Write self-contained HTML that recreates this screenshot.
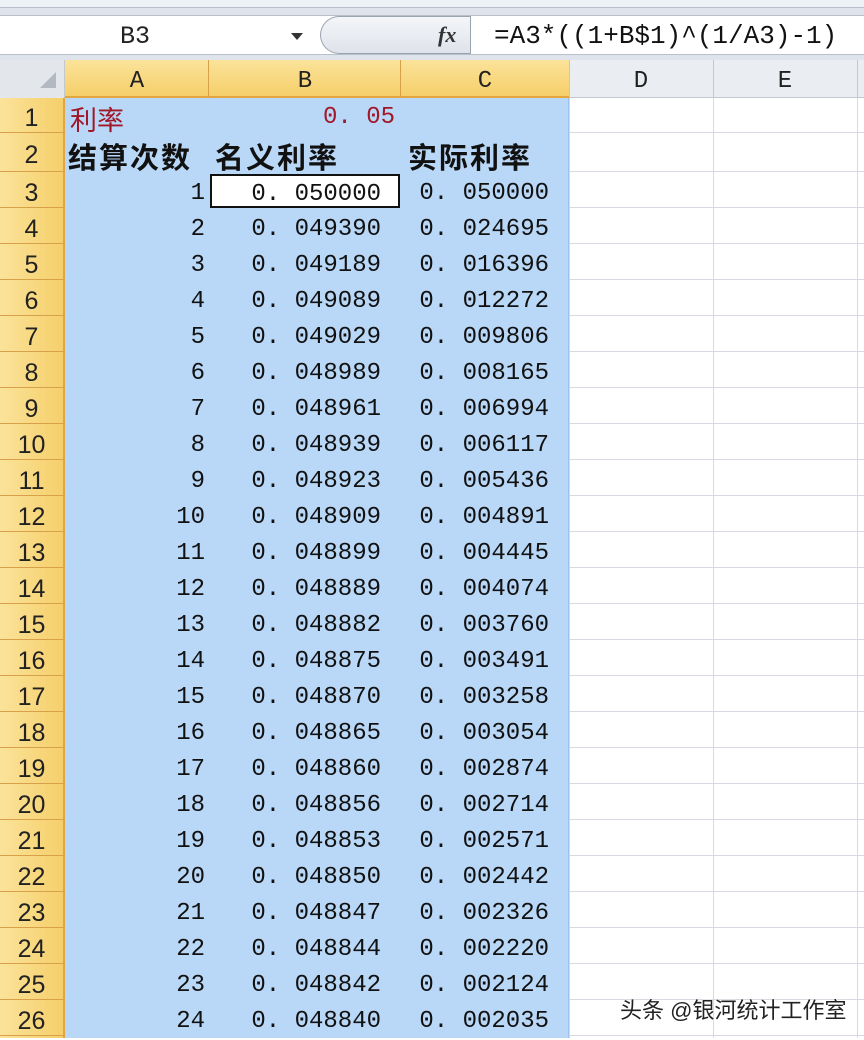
<!DOCTYPE html><html><head><meta charset="utf-8"><style>
body{margin:0;width:864px;height:1038px;overflow:hidden;background:#fff;font-family:"Liberation Sans","Noto Sans CJK SC",sans-serif;position:relative}
.a{position:absolute;box-sizing:border-box}
.mono{font-family:"Liberation Mono","Noto Sans CJK SC",monospace}
</style></head><body>
<div class="a" style="left:0;top:0;width:864px;height:60px;background:#dfe4ec"></div>
<div class="a" style="left:0;top:0;width:864px;height:8px;background:#eef1f5;border-bottom:1px solid #b9c0cb"></div>
<div class="a" style="left:0;top:15px;width:864px;height:40px;background:#fff;border-top:1px solid #b9c0cb;border-bottom:1px solid #b9c0cb"></div>
<div class="a mono" style="left:120px;top:22px;font-size:25px;color:#222">B3</div>
<div class="a" style="left:291px;top:33px;width:0;height:0;border-left:6px solid transparent;border-right:6px solid transparent;border-top:7px solid #333"></div>
<div class="a" style="left:320px;top:16px;width:150px;height:38px;border:1px solid #9aa3b0;border-radius:19px 0 0 19px;background:linear-gradient(#f4f6f9,#dfe3ea);border-right:none"></div>
<div class="a" style="left:470px;top:16px;width:1px;height:38px;background:#9aa3b0"></div>
<div class="a" style="left:438px;top:22px;font:italic bold 22px 'Liberation Serif',serif;color:#333">fx</div>
<div class="a mono" style="left:494px;top:21px;font-size:26px;color:#111">=A3*((1+B$1)^(1/A3)-1)</div>
<div class="a" style="left:0;top:60px;width:864px;height:38px;background:#eaedf1;border-bottom:1px solid #c3c8d0"></div>
<div class="a" style="left:0;top:60px;width:65px;height:38px;background:#e3e6eb;border-right:1px solid #c3c8d0"></div>
<div class="a" style="left:40px;top:72px;width:0;height:0;border-left:16px solid transparent;border-bottom:16px solid #b4b9c1"></div>
<div class="a" style="left:65px;top:60px;width:504px;height:38px;background:linear-gradient(#fbe39a,#f5cf6a);border-bottom:2px solid #e3a53d"></div>
<div class="a" style="left:208px;top:60px;width:1px;height:38px;background:#d9a04a"></div>
<div class="a" style="left:400px;top:60px;width:1px;height:38px;background:#d9a04a"></div>
<div class="a" style="left:569px;top:60px;width:1px;height:38px;background:#c3c8d0"></div>
<div class="a" style="left:713px;top:60px;width:1px;height:38px;background:#c3c8d0"></div>
<div class="a" style="left:857px;top:60px;width:1px;height:38px;background:#c3c8d0"></div>
<div class="a mono" style="left:65px;top:68px;width:144px;text-align:center;font-size:24px;color:#222">A</div>
<div class="a mono" style="left:209px;top:68px;width:192px;text-align:center;font-size:24px;color:#222">B</div>
<div class="a mono" style="left:401px;top:68px;width:168px;text-align:center;font-size:24px;color:#222">C</div>
<div class="a mono" style="left:569px;top:68px;width:144px;text-align:center;font-size:24px;color:#222">D</div>
<div class="a mono" style="left:713px;top:68px;width:144px;text-align:center;font-size:24px;color:#222">E</div>
<div class="a" style="left:0;top:98px;width:65px;height:940px;background:linear-gradient(90deg,#fbe39a,#f5cf6a);border-right:2px solid #e3a53d"></div>
<div class="a" style="left:65px;top:98px;width:504px;height:940px;background:#b9d7f6;border-right:1px solid #9cc3ee"></div>
<svg class="a" style="left:0;top:0" width="864" height="1038">
<g stroke="#d6dae0" stroke-width="1">
<line x1="569.5" y1="98" x2="569.5" y2="1038"/><line x1="713.5" y1="98" x2="713.5" y2="1038"/><line x1="857.5" y1="98" x2="857.5" y2="1038"/>
</g>
</svg>
<div id="rows"></div>
<script>
var tops=[98,133,172];for(var i=3;i<=26;i++)tops.push(172+(i-2)*36);
var B=["0.049390","0.049189","0.049089","0.049029","0.048989","0.048961","0.048939","0.048923","0.048909","0.048899","0.048889","0.048882","0.048875","0.048870","0.048865","0.048860","0.048856","0.048853","0.048850","0.048847","0.048844","0.048842","0.048840"];
var C=["0.024695","0.016396","0.012272","0.009806","0.008165","0.006994","0.006117","0.005436","0.004891","0.004445","0.004074","0.003760","0.003491","0.003258","0.003054","0.002874","0.002714","0.002571","0.002442","0.002326","0.002220","0.002124","0.002035"];
function f(s){return s.replace(".",". ");}
var h="";
for(var r=1;r<=26;r++){var t=tops[r-1],b=tops[r]||1038,hh=b-t;
h+='<div class="a" style="left:0;top:'+(b-1)+'px;width:65px;height:1px;background:#d9a04a"></div>';
h+='<div class="a" style="left:569px;top:'+(b-1)+'px;width:295px;height:1px;background:#d6dae0"></div>';
h+='<div class="a" style="left:0;top:'+(t+3)+'px;width:63px;height:'+hh+'px;line-height:'+hh+'px;text-align:center;font-size:25px;color:#222;font-family:\'Liberation Sans\',sans-serif">'+r+'</div>';
if(r>=3){var n=r-2;var bv=r==3?"0.050000":B[r-4],cv=r==3?"0.050000":C[r-4];var tt=t+4;
h+='<div class="a mono" style="left:65px;top:'+tt+'px;width:140px;height:36px;line-height:36px;text-align:right;font-size:24px;color:#111">'+n+'</div>';
h+='<div class="a mono" style="left:209px;top:'+tt+'px;width:172px;height:36px;line-height:36px;text-align:right;font-size:24px;color:#111">'+f(bv)+'</div>';
h+='<div class="a mono" style="left:401px;top:'+tt+'px;width:148px;height:36px;line-height:36px;text-align:right;font-size:24px;color:#111">'+f(cv)+'</div>';}}
document.getElementById('rows').innerHTML=h;
</script>
<div class="a" style="left:210px;top:174px;width:190px;height:34px;background:#fff;border:2px solid #111"></div>
<div class="a mono" style="left:209px;top:177px;width:172px;height:36px;line-height:36px;text-align:right;font-size:24px;color:#111">0. 050000</div>
<div class="a" style="left:70px;top:99px;font-size:27px;color:#a01828">利率</div>
<div class="a mono" style="left:209px;top:104px;width:186px;text-align:right;font-size:24px;color:#a01828">0. 05</div>
<div class="a" style="left:68px;top:135px;font-size:29px;font-weight:bold;color:#111;letter-spacing:2px">结算次数</div>
<div class="a" style="left:215px;top:135px;font-size:29px;font-weight:bold;color:#111;letter-spacing:2px">名义利率</div>
<div class="a" style="left:408px;top:135px;font-size:29px;font-weight:bold;color:#111;letter-spacing:2px">实际利率</div>
<div class="a" style="left:620px;top:993px;font-size:22px;color:#222;text-shadow:0 0 2px #fff">头条 @银河统计工作室</div>
</body></html>
